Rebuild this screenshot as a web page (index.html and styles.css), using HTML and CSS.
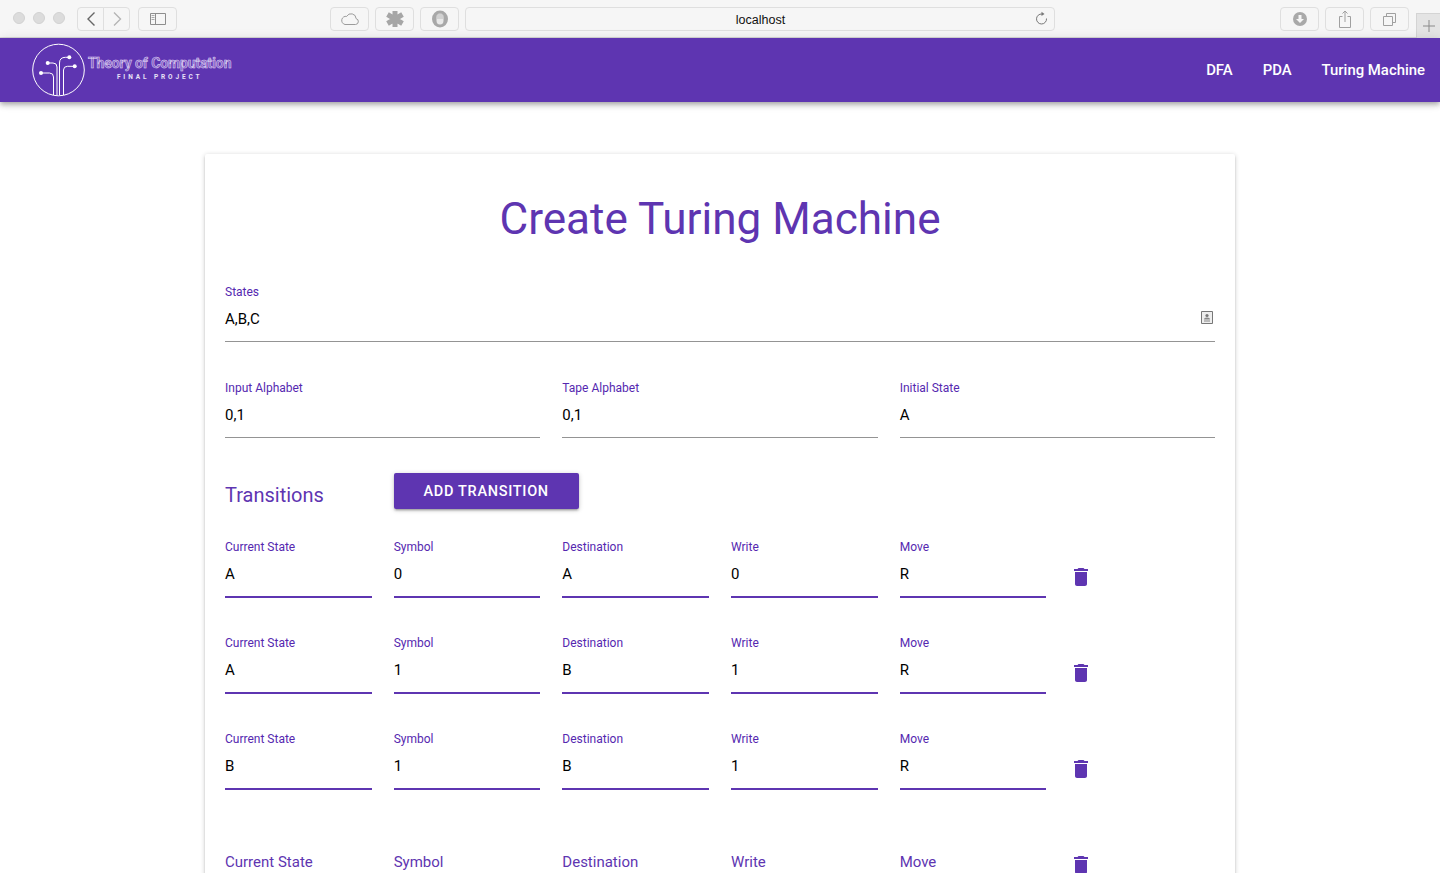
FILE: index.html
```html
<!DOCTYPE html>
<html lang="en">
<head>
<meta charset="utf-8">
<title>Create Turing Machine</title>
<link rel="stylesheet" href="styles.css">
</head>
<body>
<div class="chrome">
  <div class="lights"><i></i><i></i><i></i></div>
  <div class="nav-pair">
    <span class="cbtn back"><svg width="12" height="16" viewBox="0 0 12 16"><path d="M9.5 1.5 3 8l6.500 6.500" fill="none" stroke="#666" stroke-width="1.400"/></svg></span>
    <span class="cbtn fwd"><svg width="12" height="16" viewBox="0 0 12 16"><path d="M3 1.500 9.500 8 3 14.500" fill="none" stroke="#b5b5b5" stroke-width="1.400"/></svg></span>
  </div>
  <span class="cbtn wide side"><svg width="16" height="12" viewBox="0 0 16 12"><path d="M.5.5h15v11H.5zM5.500.5v11" fill="none" stroke="#8e8e8e"/><path d="M1.500 2.500h3M1.500 4.500h3M1.500 6.500h3" stroke="#aaa"/></svg></span>
  <span class="cbtn wide cloud"><svg width="20" height="14" viewBox="0 0 20 14"><path d="M5 12.500h10.500a3 3 0 0 0 .6-5.900A5 5 0 0 0 6.700 4.400 4 4 0 0 0 5 12.500z" fill="none" stroke="#9b9b9b"/></svg></span>
  <span class="cbtn wide ext"><svg width="22" height="20" viewBox="0 0 22 20"><path d="M11 2v16M3.500 5.500l15 9M18.500 5.500l-15 9" stroke="#a6a6a6" stroke-width="5"/></svg></span>
  <span class="cbtn wide ext"><svg width="16" height="18" viewBox="0 0 16 18"><ellipse cx="8" cy="9" rx="8" ry="8.500" fill="#a8a8a8"/><path d="M4.500 7.500c0-3 1-4 3.500-4s3.500 1 3.500 4v3c0 2.500-1 4-3.500 4s-3.500-1.500-3.500-4z" fill="#e8e8e8"/><path d="M6 4v5M8 3.500V9M10 4v5" stroke="#a8a8a8" stroke-width=".7"/></svg></span>
  <div class="url"><span class="url-text">localhost</span>
    <svg class="reload" width="12" height="14" viewBox="0 0 12 14"><path d="M10.500 7.500A5 5 0 1 1 6 3" fill="none" stroke="#777"/><path d="M5.500.8 8.500 3 5.500 5z" fill="#777"/></svg>
  </div>
  <div class="right-btns">
    <span class="cbtn wide"><svg width="14" height="14" viewBox="0 0 14 14"><circle cx="7" cy="7" r="7" fill="#a9a9a9"/><path d="M5.500 3h3v4H11l-4 4-4-4h2.500z" fill="#f6f6f6"/></svg></span>
    <span class="cbtn wide"><svg width="12" height="18" viewBox="0 0 12 18"><path d="M3.500 6.500H.5v11h11v-11h-3M6 12V1M3.500 3.500 6 1l2.500 2.500" fill="none" stroke="#a0a0a0"/></svg></span>
    <span class="cbtn wide"><svg width="13" height="13" viewBox="0 0 13 13"><path d="M.5 3.500h9v9h-9zM3.500 3.500v-3h9v9h-3" fill="none" stroke="#a0a0a0"/></svg></span>
  </div>
  <span class="newtab"><svg width="12" height="12" viewBox="0 0 12 12"><path d="M6 0v12M0 6h12" stroke="#8a8a8a"/></svg></span>
</div>

<header class="appbar">
  <div class="brand">
    <svg class="logo" width="54" height="54" viewBox="0 0 54 54">
      <circle cx="26.500" cy="27" r="25.800" fill="none" stroke="#fff" stroke-width="1"/>
      <g fill="none" stroke="#fff" stroke-width="1">
        <path d="M21.500 52V34q0-4-4-4H9"/>
        <path d="M25 52V24q0-4-4-4h-5.300"/>
        <path d="M27.500 52V20q0-5.700 6-5.700h4"/>
        <path d="M31.500 52V27q0-3.700 4-3.700h7"/>
      </g>
      <g fill="#fff"><circle cx="9" cy="30" r="2"/><circle cx="15.700" cy="20" r="2"/><circle cx="37.300" cy="14.300" r="2"/><circle cx="42.700" cy="23.300" r="2"/></g>
    </svg>
    <div class="brand-text">
      <span class="brand-title">Theory of Computation</span>
      <span class="brand-sub">FINAL PROJECT</span>
    </div>
  </div>
  <nav class="links"><a>DFA</a><a>PDA</a><a>Turing Machine</a></nav>
</header>

<main class="card">
  <h1 class="title">Create Turing Machine</h1>

  <div class="field states">
    <label>States</label>
    <div class="value">A,B,C
      <svg class="autofill" width="12" height="13" viewBox="0 0 12 13"><path d="M.5.500h11v12H.5z" fill="#eee" stroke="#777"/><circle cx="6" cy="4.500" r="1.600" fill="#777"/><path d="M3 8.500q0-2 3-2t3 2zM3 9.500h6v1H3z" fill="#888"/></svg>
    </div>
  </div>

  <div class="row-three">
    <div class="field"><label>Input Alphabet</label><div class="value">0,1</div></div>
    <div class="field"><label>Tape Alphabet</label><div class="value">0,1</div></div>
    <div class="field"><label>Initial State</label><div class="value">A</div></div>
  </div>

  <div class="row-head">
    <h2 class="subtitle">Transitions</h2>
    <button class="add">ADD TRANSITION</button>
  </div>

  <div class="row-six">
    <div class="field focus"><label>Current State</label><div class="value">A</div></div>
    <div class="field focus"><label>Symbol</label><div class="value">0</div></div>
    <div class="field focus"><label>Destination</label><div class="value">A</div></div>
    <div class="field focus"><label>Write</label><div class="value">0</div></div>
    <div class="field focus"><label>Move</label><div class="value">R</div></div>
    <div class="trash"><svg width="24" height="24" viewBox="0 0 24 24"><path d="M6 19c0 1.100.9 2 2 2h8c1.100 0 2-.9 2-2V7H6v12zM19 4h-3.500l-1-1h-5l-1 1H5v2h14V4z"/></svg></div>
  </div>
  <div class="row-six">
    <div class="field focus"><label>Current State</label><div class="value">A</div></div>
    <div class="field focus"><label>Symbol</label><div class="value">1</div></div>
    <div class="field focus"><label>Destination</label><div class="value">B</div></div>
    <div class="field focus"><label>Write</label><div class="value">1</div></div>
    <div class="field focus"><label>Move</label><div class="value">R</div></div>
    <div class="trash"><svg width="24" height="24" viewBox="0 0 24 24"><path d="M6 19c0 1.100.9 2 2 2h8c1.100 0 2-.9 2-2V7H6v12zM19 4h-3.500l-1-1h-5l-1 1H5v2h14V4z"/></svg></div>
  </div>
  <div class="row-six">
    <div class="field focus"><label>Current State</label><div class="value">B</div></div>
    <div class="field focus"><label>Symbol</label><div class="value">1</div></div>
    <div class="field focus"><label>Destination</label><div class="value">B</div></div>
    <div class="field focus"><label>Write</label><div class="value">1</div></div>
    <div class="field focus"><label>Move</label><div class="value">R</div></div>
    <div class="trash"><svg width="24" height="24" viewBox="0 0 24 24"><path d="M6 19c0 1.100.9 2 2 2h8c1.100 0 2-.9 2-2V7H6v12zM19 4h-3.500l-1-1h-5l-1 1H5v2h14V4z"/></svg></div>
  </div>
  <div class="row-six">
    <div class="field empty"><div class="placeholder">Current State</div></div>
    <div class="field empty"><div class="placeholder">Symbol</div></div>
    <div class="field empty"><div class="placeholder">Destination</div></div>
    <div class="field empty"><div class="placeholder">Write</div></div>
    <div class="field empty"><div class="placeholder">Move</div></div>
    <div class="trash"><svg width="24" height="24" viewBox="0 0 24 24"><path d="M6 19c0 1.100.9 2 2 2h8c1.100 0 2-.9 2-2V7H6v12zM19 4h-3.500l-1-1h-5l-1 1H5v2h14V4z"/></svg></div>
  </div>
</main>
</body>
</html>
```
FILE: styles.css
```css
* { box-sizing: border-box; }
html, body { margin: 0; height: 873px; overflow: hidden; background: #fff; }
body { font-family: Roboto, "Noto Sans", sans-serif; color: #000; }

.chrome {
  height: 38px; background: #f6f6f6; border-bottom: 1px solid #d9d9d9;
  display: flex; align-items: flex-start; padding: 7px 0 0 13px; position: relative;
}
.lights { display: flex; gap: 8px; margin-top: 5px; width: 64px; }
.lights i { width: 12px; height: 12px; border-radius: 50%; background: #dcdcdc; border: 1px solid #d2d2d2; }
.nav-pair { display: flex; }
.cbtn {
  height: 24px; border: 1px solid #dfdfdf; border-radius: 4px; background: #f6f6f6;
  display: flex; align-items: center; justify-content: center;
}
.back { width: 27px; border-radius: 4px 0 0 4px; }
.fwd { width: 27px; margin-left: -1px; border-radius: 0 4px 4px 0; }
.wide { width: 39px; }
.side { margin-left: 8px; }
.cloud { margin-left: 153px; }
.ext { margin-left: 6px; }
.url {
  width: 590px; height: 24px; margin-left: 6px; border: 1px solid #dfdfdf; border-radius: 4px;
  display: flex; align-items: center; justify-content: center; position: relative;
}
.url-text { font: 12.500px/1 "Liberation Sans", Arial, sans-serif; color: #111; margin: 2px 0 0 1px; }
.reload { position: absolute; right: 6px; top: 3px; }
.right-btns { display: flex; gap: 6px; margin-left: 225px; }
.newtab {
  position: absolute; left: 1416px; top: 13px; width: 24px; height: 25px; background: #e4e4e4;
  border-left: 1px solid #d4d4d4; border-top: 1px solid #d4d4d4;
  display: flex; align-items: center; justify-content: center;
}

.appbar {
  height: 64px; background: #5e35b1; display: flex; align-items: center; justify-content: space-between;
  padding: 0 15px 0 32px;
  box-shadow: 0 2px 4px -1px rgba(0,0,0,.2), 0 4px 5px rgba(0,0,0,.14), 0 1px 10px rgba(0,0,0,.12);
  position: relative;
}
.brand { display: flex; align-items: flex-start; align-self: stretch; }
.logo { display: block; margin-top: 5px; }
.brand-text { display: flex; flex-direction: column; align-items: center; margin: 0 0 0 2px; padding-top: 17px; }
.brand-title {
  font-size: 14px; line-height: 16px; letter-spacing: -.1px; color: #7d5cc4; font-weight: 700;
  -webkit-text-stroke: .5px #e4dcf5; white-space: nowrap;
}
.brand-sub { font-size: 6.500px; line-height: 9px; letter-spacing: 2.900px; font-weight: 700; color: #e8e2f6; margin-top: 2px; }
.links { display: flex; gap: 30px; }
.links a { color: #fff; font-size: 14.900px; line-height: 24px; font-weight: 500; }

.card {
  width: 1030px; margin: 52px auto 0; padding: 37px 20px 0; background: #fff; min-height: 800px;
  box-shadow: 0 1px 5px rgba(0,0,0,.2), 0 2px 2px rgba(0,0,0,.14), 0 3px 1px -2px rgba(0,0,0,.12);
  border-radius: 2px;
}
.title { margin: 0 0 38px; text-align: center; color: #5e35b1; font-size: 44.100px; line-height: 56px; font-weight: 400; }

.field { display: flex; flex-direction: column; min-width: 0; }
.field label { display: block; font-size: 12px; line-height: 14px; color: #5528b0; }
.value {
  position: relative; font-size: 15px; line-height: 20px; padding: 10px 0 12px;
  border-bottom: 1px solid #949494; height: 43px;
}
.autofill { position: absolute; right: 2px; top: 12px; }
.states { margin-bottom: 39px; }
.row-three { display: grid; grid-template-columns: repeat(3, minmax(0, 1fr)); gap: 22px; }
.row-head { display: grid; grid-template-columns: repeat(6, minmax(0, 1fr)); gap: 22px; margin: 35px 0 31px; }
.subtitle { margin: 9px 0 0; font-size: 20px; line-height: 26px; font-weight: 400; color: #5e35b1; }
.add {
  width: 185px; height: 36px; background: #5e35b1; color: #fff; border: 0; border-radius: 2px;
  font: 500 14.500px/38px Roboto, sans-serif; letter-spacing: .7px; padding: 0; white-space: nowrap;
  box-shadow: 0 1px 5px rgba(0,0,0,.2), 0 2px 2px rgba(0,0,0,.14), 0 3px 1px -2px rgba(0,0,0,.12);
}
.row-six { display: grid; grid-template-columns: repeat(6, minmax(0, 1fr)); gap: 22px; margin-bottom: 38px; }
.focus .value { border-bottom: 2px solid #5e35b1; height: 44px; }
.placeholder { font-size: 15px; line-height: 20px; color: #5e35b1; padding-top: 24px; height: 58px; }
.trash { padding-top: 25px; }
.trash svg { display: block; fill: #5e35b1; margin-left: .5px; }
```
